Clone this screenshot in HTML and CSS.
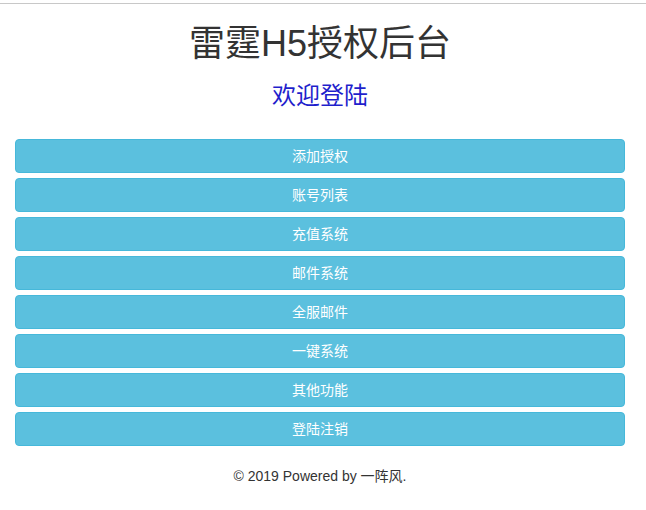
FILE: index.html
```html
<!DOCTYPE html>
<html lang="zh-CN">
<head>
<meta charset="utf-8">
<title>雷霆H5授权后台</title>
<link rel="stylesheet" href="styles.css">
</head>
<body>
<div class="topline"></div>
<div class="page">
  <h1 class="title">雷霆H5授权后台</h1>
  <h2 class="welcome">欢迎登陆</h2>
  <div class="menu">
    <a class="btn" href="#">添加授权</a>
    <a class="btn" href="#">账号列表</a>
    <a class="btn" href="#">充值系统</a>
    <a class="btn" href="#">邮件系统</a>
    <a class="btn" href="#">全服邮件</a>
    <a class="btn" href="#">一键系统</a>
    <a class="btn" href="#">其他功能</a>
    <a class="btn" href="#">登陆注销</a>
  </div>
  <p class="footer">© 2019 Powered by 一阵风.</p>
</div>
</body>
</html>
```
FILE: styles.css
```css
html, body {
  margin: 0;
  padding: 0;
  background: #fff;
}
body {
  font-family: "Liberation Sans", Arial, "Noto Sans CJK SC", sans-serif;
  font-size: 14px;
  line-height: 20px;
  color: #333;
}
.topline {
  margin-top: 3px;
  height: 0;
  border-top: 1px solid #c8c8c8;
}
.page {
  width: 640px;
}
.title {
  margin: 20px 0 0;
  font-size: 36px;
  line-height: 40px;
  font-weight: 400;
  text-align: center;
  color: #333;
}
.welcome {
  margin: 19px 0 0;
  font-size: 24px;
  line-height: 26px;
  font-weight: 400;
  text-align: center;
  color: #1f1fcc;
}
.menu {
  margin: 30px 15px 0;
  display: flex;
  flex-direction: column;
  gap: 5px;
}
.btn {
  display: block;
  box-sizing: border-box;
  height: 34px;
  padding: 6px 12px;
  border: 1px solid #46b8da;
  border-radius: 4px;
  background: #5bc0de;
  color: #fff;
  text-align: center;
  text-decoration: none;
  font-size: 14px;
  line-height: 20px;
}
.footer {
  margin: 20px 0 0;
  text-align: center;
  font-size: 14px;
  line-height: 20px;
  color: #333;
}
```
